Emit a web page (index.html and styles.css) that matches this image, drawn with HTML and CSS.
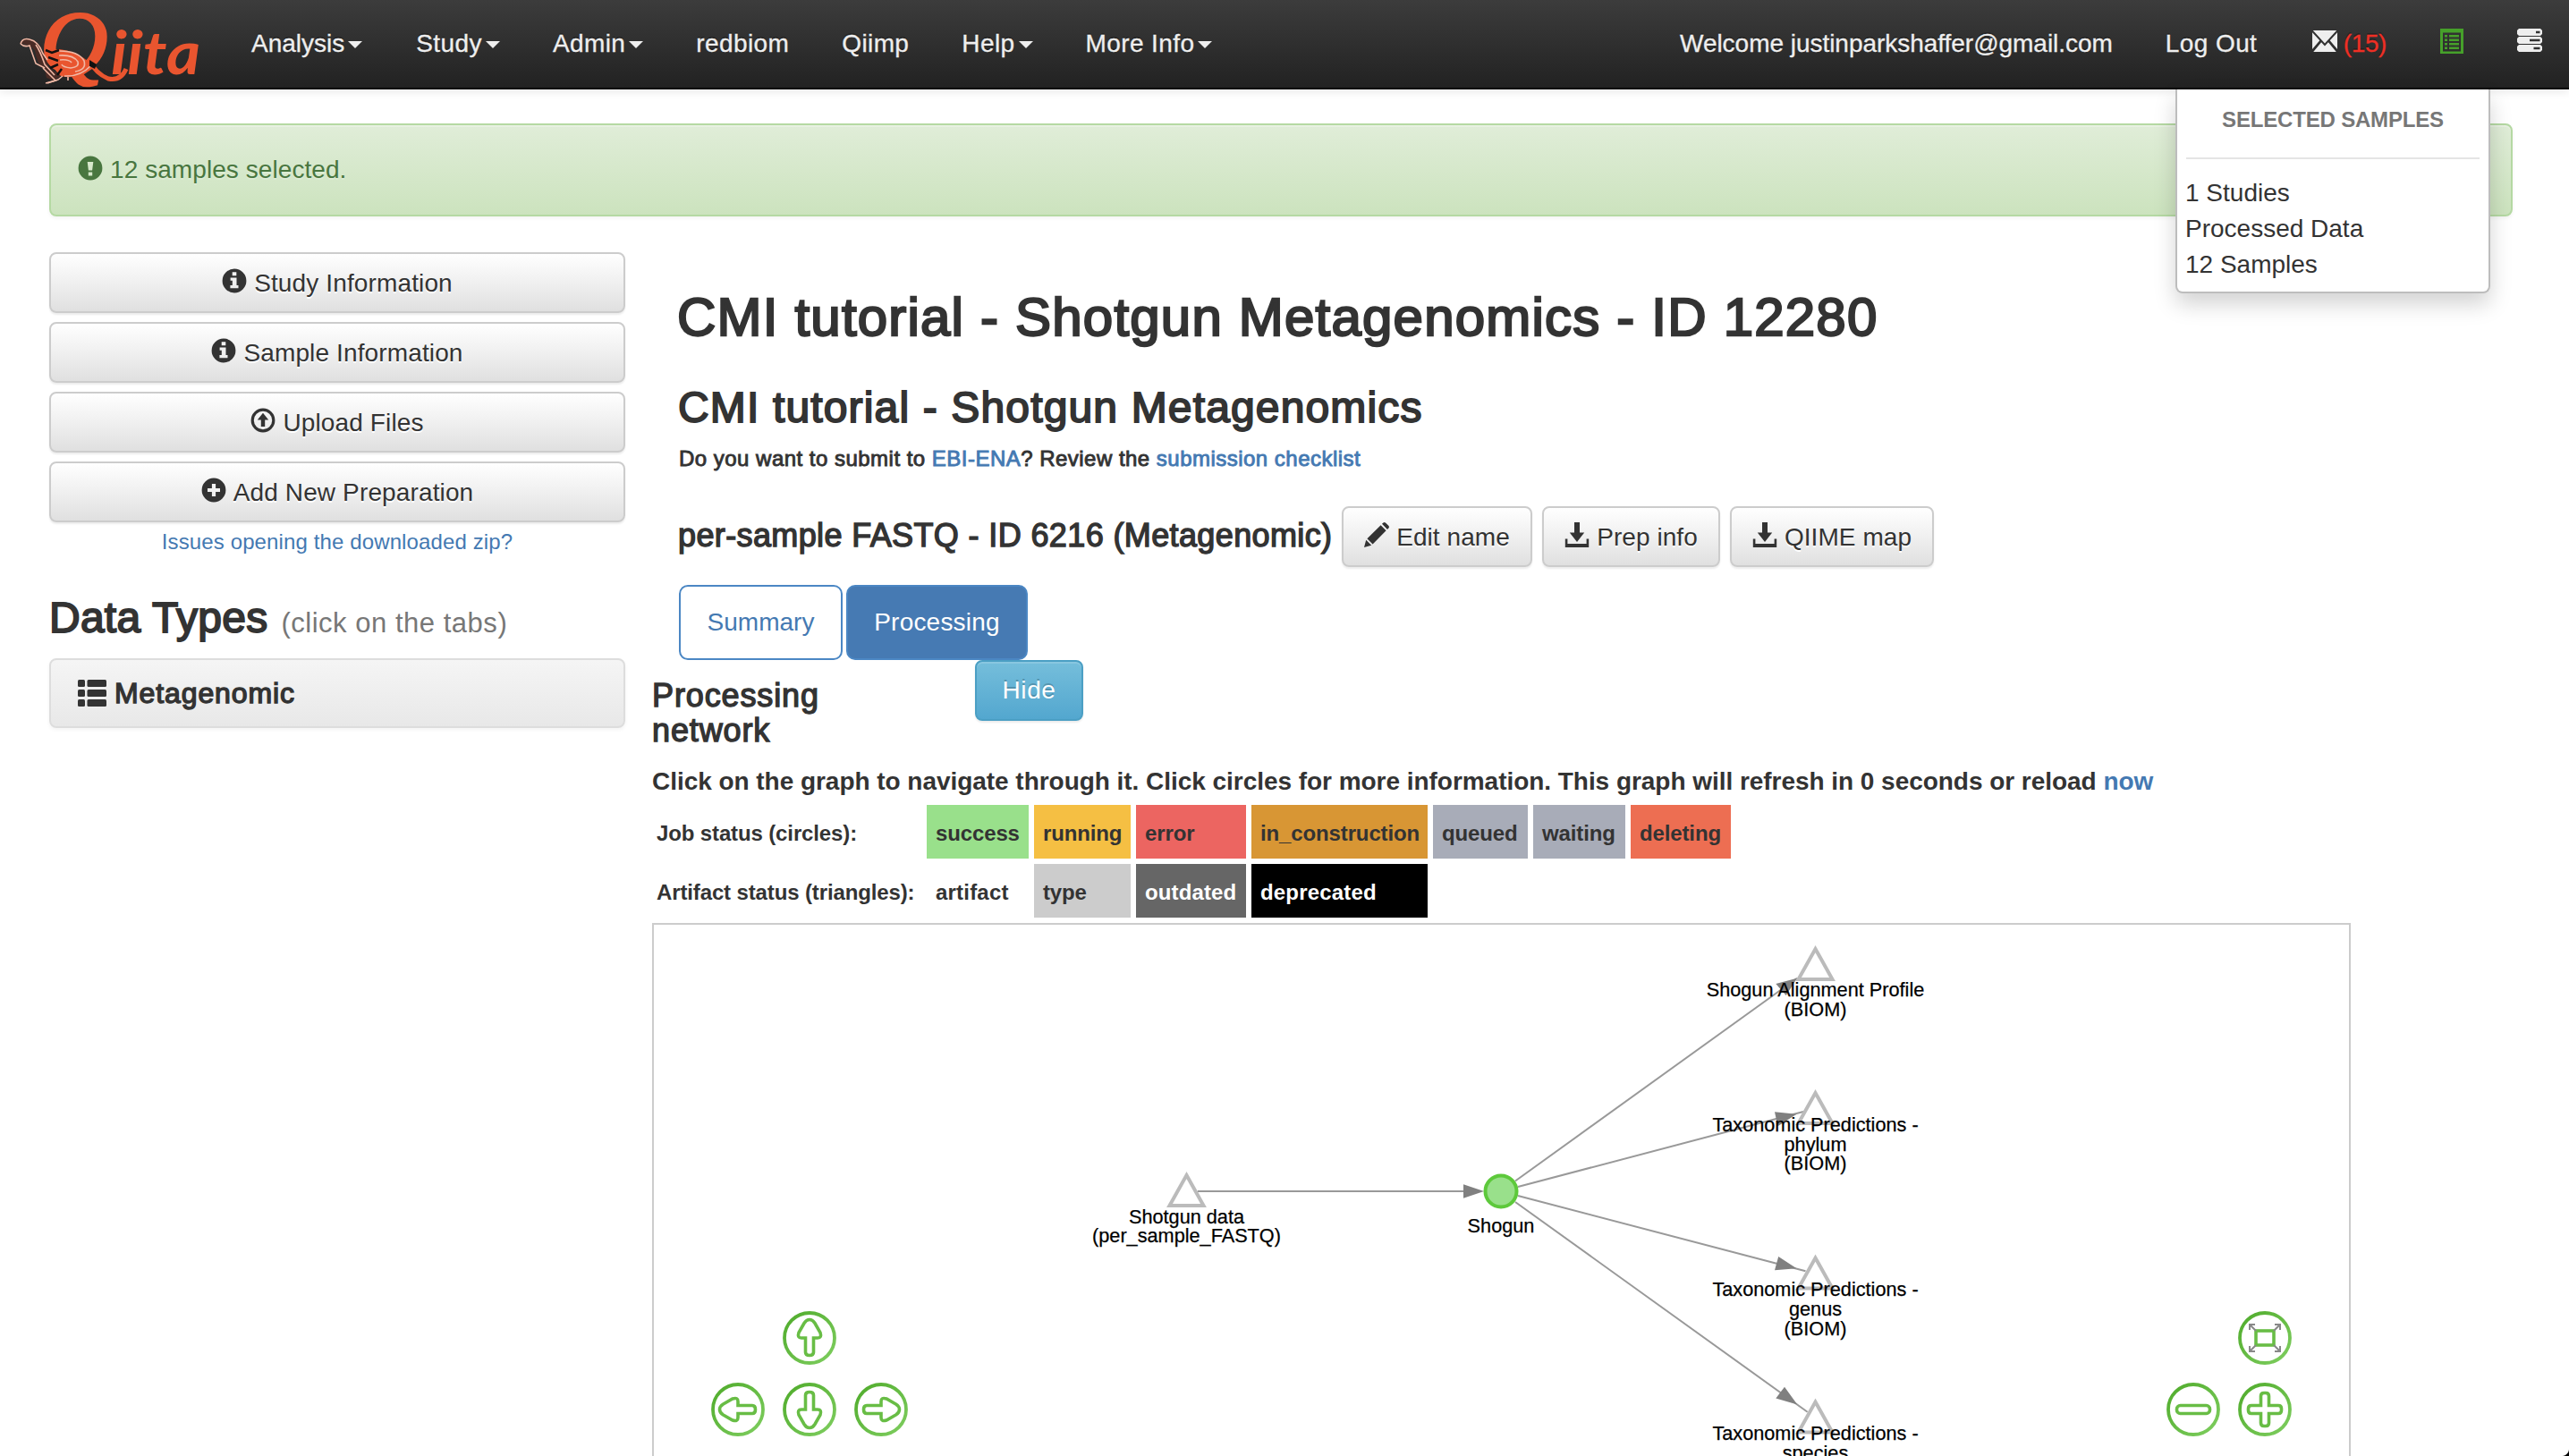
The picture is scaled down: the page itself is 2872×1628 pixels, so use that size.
FILE: index.html
```html
<!DOCTYPE html>
<html lang="en">
<head>
<meta charset="utf-8">
<title>Qiita</title>
<link rel="stylesheet" href="styles.css">
</head>
<body>
<svg class="defs" width="0" height="0">
  <defs>
    <symbol id="i-info" viewBox="0 0 28 28"><path fill-rule="evenodd" d="M14 .6a13.400 13.400 0 1 0 0 26.800 13.400 13.400 0 0 0 0-26.800zM11.700 4.300h4.600v4h-4.600zM9.600 10.600h6.900v8.500h2v3.200H9.400v-3.200h2.400v-5.300H9.600z"/></symbol>
    <symbol id="i-excl" viewBox="0 0 28 28"><path fill-rule="evenodd" d="M14 .6a13.400 13.400 0 1 0 0 26.800 13.400 13.400 0 0 0 0-26.800zM10.700 7h6.600l-1.200 9.500h-4.200zM11.800 18.500h4.400v4h-4.400z"/></symbol>
    <symbol id="i-up" viewBox="0 0 28 28"><circle cx="14" cy="14" r="11.800" fill="none" stroke="currentColor" stroke-width="3.200"/><path d="M14 5.700l6.200 7.800h-4v7.600h-4.400v-7.600h-4z"/></symbol>
    <symbol id="i-plus" viewBox="0 0 28 28"><path fill-rule="evenodd" d="M14 .6a13.400 13.400 0 1 0 0 26.800 13.400 13.400 0 0 0 0-26.800zM11.900 7h4.200v4.900H21v4.200h-4.900V21h-4.200v-4.900H7v-4.200h4.900z"/></symbol>
    <symbol id="i-list" viewBox="0 0 32 32"><rect x="0" y="1" width="8" height="8" rx="1.500"/><rect x="10.500" y="1" width="21.500" height="8" rx="1.500"/><rect x="0" y="12" width="8" height="8" rx="1.500"/><rect x="10.500" y="12" width="21.500" height="8" rx="1.500"/><rect x="0" y="23" width="8" height="8" rx="1.500"/><rect x="10.500" y="23" width="21.500" height="8" rx="1.500"/></symbol>
    <symbol id="i-pencil" viewBox="0 0 28 28"><path d="M0 28l2.200-8.200 6 6zM3.400 18.300L18.600 3.200l6 6L9.600 24.400zM20 1.800L21.400.5q1.400-1 2.800.2L27.300 3.800q1.200 1.400.1 2.700L26 7.900z"/></symbol>
    <symbol id="i-save" viewBox="0 0 28 28"><path d="M11 0h6v11.500h5.200L14 22 5.800 11.500H11zM.8 18.500h2.600V24h21.200v-5.500h2.600V28H.8z"/></symbol>
    <symbol id="i-mail" viewBox="0 0 28 24"><path d="M.8 0h26.400L14 14.500zM0 2.300l8.300 9L0 21zM28 2.300v18.700l-8.300-9.700zM1.200 24l8.900-10.800L14 17.500l3.900-4.300L26.800 24z"/></symbol>
    <symbol id="i-listalt" viewBox="0 0 26 28"><path fill-rule="evenodd" d="M0 0h26v28H0zM3 4.500V25.500h20V4.500z"/><path d="M5 7h3v2.500H5zM10 7h11v2.500H10zM5 11.500h3V14H5zM10 11.500h11V14H10zM5 16h3v2.500H5zM10 16h11v2.500H10zM5 20.500h3V23H5zM10 20.500h11V23H10z"/></symbol>
    <symbol id="i-server" viewBox="0 0 28 26"><path fill-rule="evenodd" d="M2 0h24l2 2v4l-2 2H2L0 6V2zM21 2.800v2.400h4.500V2.800zM2 9h24l2 2v4l-2 2H2l-2-2v-4zM14 11.800v2.400h11.500v-2.400zM2 18h24l2 2v4l-2 2H2l-2-2v-4zM18.500 20.800v2.400h7v-2.400z"/></symbol>
  </defs>
</svg>

<header class="navbar">
  <div class="nav-left">
    <svg class="logo" viewBox="0 0 230 98" width="230" height="98">
      <text class="logo-q" transform="translate(35 80) scale(1.060 1)">Q</text>
      <text class="logo-rest" x="114" y="83" textLength="100" lengthAdjust="spacingAndGlyphs">iita</text>
      <path class="logo-tail" d="M90 68q7 14 21 20 14 3 20-11"/>
      <path class="logo-body" d="M12 48q4-6 12-4 12 3 14 16l7 16 13 9-8 5-8-3-2-9q-9-6-11-22l-6-5z"/>
      <path class="logo-wing" d="M42 56l14-1q18 1 37 17l3 3-12 8q-16 5-26 2-10-8-16-29z"/>
      <g class="logo-lines">
        <path d="M56 57q22 0 28 11 3 10-10 12"/><path d="M56 62q16-1 21 7 2 6-8 7-9-1-10-4"/><path d="M57 67q10-1 13 3"/><path d="M62 85q18 1 30-12"/>
        <path d="M13 49q2-7 10-5 10 2 15 16l5 7"/><path d="M13 49q4 4 10 2l7 20 10 5"/><path d="M30 50q5 7 10 22l11 12"/><path d="M38 76l14 14-11 3"/><path d="M43 93l12-4 5-4M66 86v4"/>
      </g>
      <path class="logo-dark" d="M41 56l7 3 8-3M44 64l11 4M46 76l9-4M54 84l5-7"/>
      <path class="logo-spot" d="M90 67l8 5-2 5-6-3z"/>
    </svg>
    <a class="nav-item first"><span>Analysis</span><i class="caret"></i></a>
    <a class="nav-item"><span>Study</span><i class="caret"></i></a>
    <a class="nav-item"><span>Admin</span><i class="caret"></i></a>
    <a class="nav-item"><span>redbiom</span></a>
    <a class="nav-item"><span>Qiimp</span></a>
    <a class="nav-item"><span>Help</span><i class="caret"></i></a>
    <a class="nav-item"><span>More Info</span><i class="caret"></i></a>
  </div>
  <div class="nav-right">
    <a class="nav-item welcome"><span>Welcome justinparkshaffer@gmail.com</span></a>
    <a class="nav-item logout"><span>Log Out</span></a>
    <a class="nav-item mail"><svg class="ic-mail"><use href="#i-mail"/></svg><span class="count">(15)</span></a>
    <a class="nav-item"><svg class="ic-listalt"><use href="#i-listalt"/></svg></a>
    <a class="nav-item"><svg class="ic-server"><use href="#i-server"/></svg></a>
  </div>
  <div class="dropdown">
    <h6>SELECTED SAMPLES</h6>
    <hr>
    <p>1 Studies</p>
    <p>Processed Data</p>
    <p>12 Samples</p>
  </div>
</header>

<div class="alert"><svg class="ic"><use href="#i-excl"/></svg><span>12 samples selected.</span></div>

<div class="layout">
  <aside class="sidebar">
    <a class="btn"><svg class="ic"><use href="#i-info"/></svg><span>Study Information</span></a>
    <a class="btn"><svg class="ic"><use href="#i-info"/></svg><span>Sample Information</span></a>
    <a class="btn"><svg class="ic"><use href="#i-up"/></svg><span>Upload Files</span></a>
    <a class="btn"><svg class="ic"><use href="#i-plus"/></svg><span>Add New Preparation</span></a>
    <a class="issues link">Issues opening the downloaded zip?</a>
    <h3 class="types-title"><span>Data Types</span> <small>(click on the tabs)</small></h3>
    <div class="panel"><svg class="ic-list"><use href="#i-list"/></svg><span>Metagenomic</span></div>
  </aside>

  <main class="main">
    <section class="study">
      <h1>CMI tutorial - Shotgun Metagenomics - ID 12280</h1>
      <h2>CMI tutorial - Shotgun Metagenomics</h2>
      <p class="note">Do you want to submit to <a class="link">EBI-ENA</a>? Review the <a class="link">submission checklist</a></p>
      <div class="prep">
        <h4>per-sample FASTQ - ID 6216 (Metagenomic)</h4>
        <a class="btn btn-edit"><svg class="ic"><use href="#i-pencil"/></svg><span>Edit name</span></a>
        <a class="btn btn-prep"><svg class="ic"><use href="#i-save"/></svg><span>Prep info</span></a>
        <a class="btn btn-map"><svg class="ic"><use href="#i-save"/></svg><span>QIIME map</span></a>
      </div>
      <nav class="tabs">
        <a class="tab">Summary</a>
        <a class="tab active">Processing</a>
      </nav>
    </section>
    <section class="network">
      <div class="network-head">
        <h4>Processing network</h4>
        <a class="btn btn-info">Hide</a>
      </div>
      <p class="hint">Click on the graph to navigate through it. Click circles for more information. This graph will refresh in 0 seconds or reload <a class="link">now</a></p>
      <div class="legend">
        <b class="label">Job status (circles):</b>
        <b class="c-success">success</b>
        <b class="c-running">running</b>
        <b class="c-error">error</b>
        <b class="c-construct">in_construction</b>
        <b class="c-wait">queued</b>
        <b class="c-wait">waiting</b>
        <b class="c-deleting">deleting</b>
        <b class="label">Artifact status (triangles):</b>
        <b class="c-artifact">artifact</b>
        <b class="c-type">type</b>
        <b class="c-outdated">outdated</b>
        <b class="c-deprecated">deprecated</b>
      </div>
      <div class="graph">
        <svg viewBox="731 1034 1895 600" width="1895" height="600">
          <defs>
            <linearGradient id="g" x1="0" y1="0" x2="1" y2="1"><stop offset="0" stop-color="#4fab2b"/><stop offset="1" stop-color="#7fce60"/></linearGradient>
            <path id="tri" d="M0 4.500L19 38.500H-19z"/>
            <g id="ring"><circle r="28" fill="#fff" stroke="url(#g)" stroke-width="3.800"/></g>
            <path id="arrow" d="M0-20.500q3.500 0 6 4l6 10.500q2 6-3 6H4.500v16q0 3.500-4.500 3.500t-4.500-3.500V0H-9q-5 0-3-6l6-10.500q2.500-4 6-4z"/>
          </defs>
          <g class="edges">
            <path d="M1339 1332H1640M1694 1320.500L2009 1093.700M1697 1327L2016 1243M1697 1337L2018.500 1421.300M1694 1344L2020.600 1578.700"/>
          </g>
          <path class="heads" d="M1659 1332L1636 1324.200v15.600zM2009 1093.700L1985.300 1099.900L1996.700 1113zM2008.500 1245.700L1984 1243.300L1987.400 1259.200zM2008.500 1418.200L1988.200 1405L1984 1420.200zM2009.300 1570.600L1995 1550.800L1985.300 1563.600z"/>
          <circle class="job" cx="1678" cy="1332" r="17.500"/>
          <g class="tris">
            <use href="#tri" x="1326.500" y="1309.500"/><use href="#tri" x="2029.500" y="1056.500"/><use href="#tri" x="2029.500" y="1217.500"/><use href="#tri" x="2029.500" y="1402"/><use href="#tri" x="2029.500" y="1563"/>
          </g>
          <g class="node-text">
            <text x="1326.500" y="1367.500">Shotgun data</text><text x="1326.500" y="1389">(per_sample_FASTQ)</text>
            <text x="1678" y="1378">Shogun</text>
            <text x="2029.500" y="1114">Shogun Alignment Profile</text><text x="2029.500" y="1136">(BIOM)</text>
            <text x="2029.500" y="1265">Taxonomic Predictions -</text><text x="2029.500" y="1286.500">phylum</text><text x="2029.500" y="1308">(BIOM)</text>
            <text x="2029.500" y="1449">Taxonomic Predictions -</text><text x="2029.500" y="1471">genus</text><text x="2029.500" y="1492.500">(BIOM)</text>
            <text x="2029.500" y="1610">Taxonomic Predictions -</text><text x="2029.500" y="1631.500">species</text>
          </g>
          <g class="controls">
            <g transform="translate(905 1496)"><use href="#ring"/><use href="#arrow"/></g>
            <g transform="translate(905 1576)"><use href="#ring"/><use href="#arrow" transform="rotate(180)"/></g>
            <g transform="translate(825 1576)"><use href="#ring"/><use href="#arrow" transform="rotate(-90)"/></g>
            <g transform="translate(985 1576)"><use href="#ring"/><use href="#arrow" transform="rotate(90)"/></g>
            <g transform="translate(2452 1576)"><use href="#ring"/><rect x="-18.500" y="-4.500" width="37" height="9" rx="4"/></g>
            <g transform="translate(2532 1576)"><use href="#ring"/><path d="M-4.500-4.500V-15q0-3.500 3.500-3.500h2q3.500 0 3.500 3.500v10.500H15q3.500 0 3.500 3.500v2q0 3.500-3.500 3.500H4.500V15q0 3.500-3.500 3.500h-2q-3.500 0-3.500-3.500V4.500H-15q-3.500 0-3.500-3.500v-2q0-3.500 3.500-3.500z"/></g>
            <g transform="translate(2532 1496)"><use href="#ring"/><rect x="-10" y="-8" width="20" height="16"/><path class="gray" d="M-10-8l-7-7M10-8l7-7M-10 8l-7 7M10 8l7 7M-17-9v-6h6M17-9v-6h-6M-17 9v6h6M17 9v6h-6"/></g>
          </g>
        </svg>
      </div>
    </section>
  </main>
</div>
<i class="corner"></i>
</body>
</html>
```
FILE: styles.css
```css
* { box-sizing: border-box; }
body { margin: 0; height: 1628px; overflow: hidden; background: #fff; color: #333; font: 28px/40px "Liberation Sans", Arial, sans-serif; position: relative; }
h1, h2, h3, h4, h6, p { margin: 0; font-weight: 400; }
svg { display: block; flex: none; overflow: visible; fill: currentColor; }
.defs { position: absolute; }
.link { color: #4479b2; }

.navbar { position: relative; z-index: 5; display: flex; justify-content: space-between; height: 100px; border-bottom: 2px solid #080808; background: linear-gradient(#3c3c3c, #222); box-shadow: 0 2px 10px rgba(0,0,0,.1); color: #eee; text-shadow: 0 -2px 0 rgba(0,0,0,.25); line-height: 97px; -webkit-text-stroke: .3px; }
.nav-left, .nav-right { display: flex; }
.logo { margin-left: 10px; margin-right: 11px; text-shadow: none; }
.logo-q { font: italic 98px "Liberation Serif", serif; fill: #e9552f; stroke: #e9552f; stroke-width: 3px; }
.logo-rest { font: italic 700 66px Lato, sans-serif; fill: #e9552f; }
.logo-tail { fill: none; stroke: #e9552f; stroke-width: 5px; }
.logo-body { fill: #4a2b25; }
.logo-wing { fill: #e9552f; }
.logo-lines { fill: none; stroke: #f0b8a5; stroke-width: 1.600px; }
.logo-dark { fill: none; stroke: #111; stroke-width: 2.500px; }
.logo-spot { fill: #111; }
.nav-item { display: flex; padding: 0 29px 0 30px; letter-spacing: .4px; white-space: nowrap; }
.nav-item.first { padding-right: 30px; letter-spacing: 0; }
.nav-right .nav-item { padding: 0 30px; }
.nav-right .welcome { letter-spacing: -.03px; padding-right: 29px; }
.nav-right .logout { padding-right: 31.500px; }
.nav-right .mail { gap: 7px; padding-right: 30px; letter-spacing: -.4px; }
.caret { align-self: flex-start; margin: 46px 0 0 4px; border: 8px solid transparent; border-top-color: #eee; border-bottom: 0; }
.count { color: #ee2f24; }
.ic-mail { width: 28px; height: 24px; margin-top: 34px; }
.ic-listalt { width: 26px; height: 28px; margin-top: 32px; color: #46a02a; }
.ic-server { width: 28px; height: 26px; margin-top: 32px; }
.dropdown { position: absolute; left: 2432px; top: 100px; width: 352px; height: 228px; padding: 0 10px; background: #fff; border: 2px solid #bdbdbd; border-top: 0; border-radius: 0 0 8px 8px; box-shadow: 0 12px 24px rgba(0,0,0,.175); color: #333; text-shadow: none; line-height: 40px; -webkit-text-stroke: 0; }
.dropdown h6 { text-align: center; font-size: 24px; font-weight: 700; color: #777; line-height: 67px; letter-spacing: -.18px; }
.dropdown hr { border: 0; height: 2px; background: #e5e5e5; margin: 9px 0 18px; }
.dropdown p { margin-left: -1px; }

.alert { display: flex; align-items: center; height: 104px; margin: 38px 63px 40px 55px; padding-left: 30px; gap: 8px; border: 2px solid #b5d9a3; border-radius: 8px; background: linear-gradient(#e0edd8, #cce3be); box-shadow: inset 0 2px 0 rgba(255,255,255,.25), 0 2px 4px rgba(0,0,0,.05); color: #48763f; text-shadow: 0 2px 0 rgba(255,255,255,.2); letter-spacing: .07px; }
.ic { width: 28px; height: 28px; margin-bottom: 4px; }

.layout { display: grid; grid-template-columns: 644px 1fr; column-gap: 30px; padding-left: 55px; }
.sidebar { display: flex; flex-direction: column; gap: 10px; }
.btn { display: flex; align-items: center; justify-content: center; gap: 8px; height: 68px; border: 2px solid #ccc; border-radius: 8px; background: linear-gradient(#fff, #e0e0e0); box-shadow: inset 0 2px 0 rgba(255,255,255,.15), 0 2px 2px rgba(0,0,0,.075); text-shadow: 0 2px 0 #fff; white-space: nowrap; letter-spacing: .13px; }
.btn span { position: relative; top: .5px; }
.issues { text-align: center; font-size: 24px; line-height: 40px; margin-top: -8px; letter-spacing: .12px; }
.types-title { font-size: 48px; line-height: 52px; letter-spacing: .25px; -webkit-text-stroke: 1.900px; margin-top: 29px; display: flex; align-items: baseline; gap: 15px; white-space: nowrap; }
.types-title small { font-size: 31px; color: #777; -webkit-text-stroke: 0; letter-spacing: .52px; }
.panel { display: flex; align-items: center; gap: 9px; height: 78px; margin-top: 3px; padding-left: 30px; border: 2px solid #ddd; border-radius: 8px; background: linear-gradient(#f5f5f5, #e8e8e8); box-shadow: 0 2px 4px rgba(0,0,0,.05); font-size: 32px; letter-spacing: .89px; -webkit-text-stroke: 1.400px; }
.ic-list { width: 32px; height: 32px; }

.study { padding: 40px 0 0 30px; }
h1, h2, .note, h4 { white-space: nowrap; }
h1 { font-size: 60px; line-height: 66px; letter-spacing: 1.200px; margin-left: -2px; -webkit-text-stroke: 2.300px; }
h2 { font-size: 48px; line-height: 53px; letter-spacing: 1.150px; margin: 41px 0 0 -1px; -webkit-text-stroke: 1.900px; }
.note { font-size: 24px; line-height: 26px; letter-spacing: .48px; margin-top: 18px; -webkit-text-stroke: .9px; }
h4 { font-size: 36px; line-height: 39px; letter-spacing: .38px; -webkit-text-stroke: 1.400px; }
.prep { display: flex; align-items: baseline; gap: 11px; height: 68px; margin-top: 40px; }
.prep h4 { width: 731px; margin-left: -1px; position: relative; top: -1px; }
.btn-edit { width: 213px; }
.btn-prep { width: 199px; }
.btn-map { width: 228px; }
.prep .btn { letter-spacing: .06px; }
.tabs { display: flex; gap: 4px; margin-top: 20px; }
.tab { width: 183px; height: 84px; text-align: center; line-height: 80px; border: 2px solid #4b87c4; border-radius: 10px; color: #4479b2; }
.tab.active { width: 203px; background: #467ab3; color: #fff; letter-spacing: .2px; }
.network-head { display: grid; grid-template-columns: 361px 121px; align-items: start; }
.network-head h4 { width: 240px; margin-top: 21px; margin-bottom: -1px; line-height: 38.500px; letter-spacing: .88px; white-space: normal; }
.btn-info { border-color: #4b9fc4; background: linear-gradient(#75bedb, #53a7cf); color: #fff; text-shadow: 0 -2px 0 rgba(0,0,0,.2); letter-spacing: .66px; }
.hint { font-weight: 700; white-space: nowrap; margin-top: 19px; letter-spacing: -.04px; }
.legend { display: grid; grid-template-columns: 296px 114px 108px 123px 197px 106px 103px 112px; gap: 6px; padding-left: 5px; margin-top: 6px; font-size: 24px; letter-spacing: -.13px; }
.legend b { height: 60px; line-height: 63px; padding-left: 10px; white-space: nowrap; }
.legend .label { padding-left: 0; grid-column: 1; }
.c-success { background: #99e08b; }
.c-running { background: #f5bf43; }
.c-error { background: #ec6561; }
.c-construct { background: #d89634; }
.c-wait { background: #a8acb8; }
.c-deleting { background: #ed6e52; }
.c-artifact { letter-spacing: .2px; }
.c-type { background: #ccc; }
.c-outdated { background: #666; color: #fff; letter-spacing: .12px; }
.c-deprecated { background: #000; color: #fff; letter-spacing: .18px; }
.graph { width: 1899px; margin-top: 6px; border: 2px solid #ccc; }
.edges { fill: none; stroke: #999; stroke-width: 2px; }
.heads { fill: #808080; }
.job { fill: #99e08b; stroke: #5dc93b; stroke-width: 4px; }
.tris { fill: #fff; stroke: #bbb; stroke-width: 4px; }
.node-text { fill: #000; font-size: 21.700px; text-anchor: middle; stroke: #000; stroke-width: .25px; }
.controls { fill: none; stroke: #68bd45; stroke-width: 3.600px; }
.gray { stroke: #888; stroke-width: 2px; }
.corner { position: absolute; right: 0; bottom: 0; width: 8px; height: 8px; background: radial-gradient(circle at 0 0, transparent 7.500px, #000 8.500px); }
```
